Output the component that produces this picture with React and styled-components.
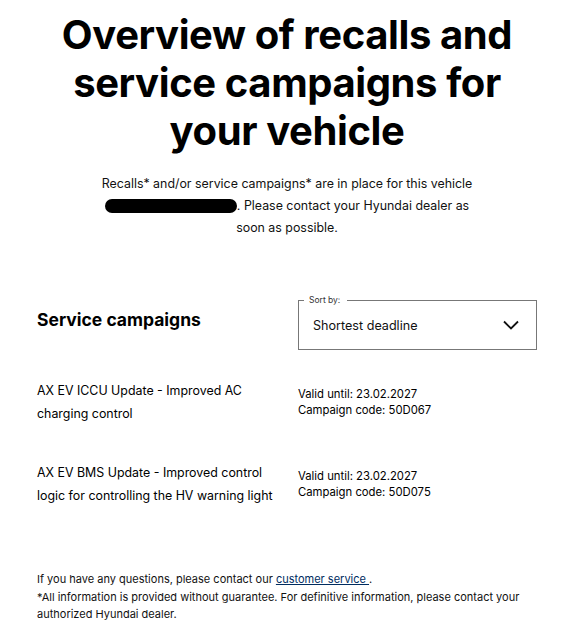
import React from "react";
import styled, { createGlobalStyle } from "styled-components";

const Global = createGlobalStyle`
  html, body { margin: 0; padding: 0; background: #fff; }
  body { font-family: Inter, "Noto Sans", Arial, sans-serif; color: #000; }
`;

const Page = styled.main`
  width: 500px;
  margin: 0 0 0 37px;
  padding-top: 11px;
`;

const Title = styled.h1`
  margin: 0;
  font-family: Inter, Arial, sans-serif;
  font-weight: 700;
  font-size: 40px;
  line-height: 48px;
  letter-spacing: -0.4px;
  text-align: center;
  white-space: nowrap;
`;

const Intro = styled.p`
  margin: 18px auto 0;
  width: 374px;
  font-size: 12.4px;
  line-height: 22px;
  text-align: center;
  color: #111;
`;

const Redacted = styled.span`
  display: inline-block;
  width: 132px;
  height: 14px;
  background: #000;
  border-radius: 7px;
  vertical-align: -3px;
`;

const SectionHead = styled.div`
  margin-top: 56px;
  display: flex;
  justify-content: space-between;
  align-items: flex-start;
`;

const SectionTitle = styled.h2`
  margin: 14px 0 0;
  font-weight: 700;
  font-size: 17.5px;
  line-height: 22px;
`;

const Select = styled.fieldset`
  margin: 0;
  width: 239px;
  height: 55px;
  box-sizing: border-box;
  border: 1px solid #777;
  padding: 0 14px;
  display: flex;
  align-items: center;
  justify-content: space-between;
`;

const Legend = styled.legend`
  font-size: 8.5px;
  color: #333;
  padding: 0 7px 0 5px;
  margin-left: -9px;
  line-height: 10px;
`;

const SelectValue = styled.span`
  font-size: 12.6px;
  color: #111;
  margin-top: -3px;
`;

const Chevron = styled.svg`
  width: 18px;
  height: 12px;
  margin-top: -5px;
  margin-right: 2px;
`;

const List = styled.div`
  margin-top: 29px;
`;

const Row = styled.div`
  display: flex;
  align-items: flex-start;
  gap: 16px;
  height: 82px;
`;

const RowTitle = styled.div`
  width: 245px;
  font-size: 12.4px;
  line-height: 23px;
`;

const RowMeta = styled.div`
  font-size: 11.3px;
  line-height: 16px;
  padding-top: 7px;
`;

const Footer = styled.footer`
  margin-top: 28px;
  font-size: 11px;
  line-height: 17.5px;
  color: #111;
`;

const Link = styled.a`
  color: #002c5f;
  text-decoration: underline;
`;

const campaigns = [
  { title: "AX EV ICCU Update - Improved AC charging control", valid: "23.02.2027", code: "50D067" },
  { title: "AX EV BMS Update - Improved control logic for controlling the HV warning light", valid: "23.02.2027", code: "50D075" },
];

export default function App() {
  return (
    <>
      <Global />
      <Page>
        <Title>
          Overview of recalls and
          <br />
          service campaigns for
          <br />
          your vehicle
        </Title>
        <Intro>
          Recalls* and/or service campaigns* are in place for this vehicle <Redacted />. Please contact your Hyundai dealer as soon as possible.
        </Intro>
        <SectionHead>
          <SectionTitle>Service campaigns</SectionTitle>
          <Select>
            <Legend>Sort by:</Legend>
            <SelectValue>Shortest deadline</SelectValue>
            <Chevron viewBox="0 0 18 12" fill="none" stroke="#111" strokeWidth="1.8">
              <path d="M2 2.5 L9 9.5 L16 2.5" />
            </Chevron>
          </Select>
        </SectionHead>
        <List>
          {campaigns.map((c) => (
            <Row key={c.code}>
              <RowTitle>{c.title}</RowTitle>
              <RowMeta>
                Valid until: {c.valid}
                <br />
                Campaign code: {c.code}
              </RowMeta>
            </Row>
          ))}
        </List>
        <Footer>
          If you have any questions, please contact our <Link href="#">customer service </Link>.
          <br />
          *All information is provided without guarantee. For definitive information, please contact your authorized Hyundai dealer.
        </Footer>
      </Page>
    </>
  );
}
